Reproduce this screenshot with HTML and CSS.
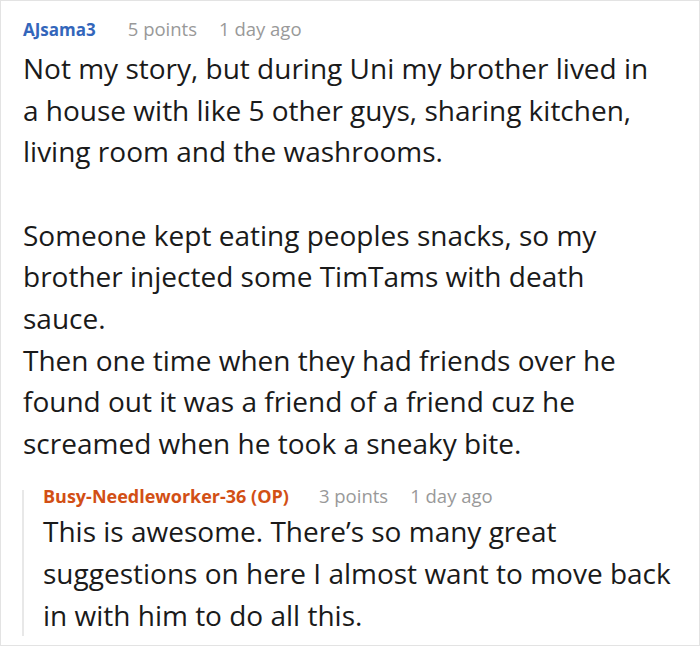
FILE: index.html
```html
<!DOCTYPE html>
<html>
<head>
<meta charset="utf-8">
<link rel="stylesheet" href="styles.css">
</head>
<body>
<div class="frame">
  <div class="comment">
    <div class="meta">
      <span class="author">AJsama3</span>
      <span class="info">5 points</span>
      <span class="info">1 day ago</span>
    </div>
    <div class="text main-text">
      <p>Not my story, but during Uni my brother lived in a house with like 5 other guys, sharing kitchen, living room and the washrooms.</p>
      <p class="gap">Someone kept eating peoples snacks, so my brother injected some TimTams with death sauce.<br>Then one time when they had friends over he found out it was a friend of a friend cuz he screamed when he took a sneaky bite.</p>
    </div>
    <div class="reply">
      <div class="meta">
        <span class="author op">Busy-Needleworker-36 (OP)</span>
        <span class="info">3 points</span>
        <span class="info">1 day ago</span>
      </div>
      <div class="text reply-text">
        <p>This is awesome. There’s so many great suggestions on here I almost want to move back in with him to do all this.</p>
      </div>
    </div>
  </div>
</div>
</body>
</html>
```

FILE: styles.css
```css
html, body {
  margin: 0;
  padding: 0;
  background: #fff;
}
.frame {
  width: 700px;
  height: 646px;
  box-sizing: border-box;
  border: 1px solid #e3e3e3;
  overflow: hidden;
  font-family: "Open Sans", "Noto Sans", sans-serif;
}
.comment {
  padding: 15px 0 0 22px;
}
.meta {
  display: flex;
  align-items: baseline;
  line-height: 26px;
}
.author {
  font-size: 17px;
  font-weight: bold;
  color: #3366bb;
  margin-right: 32px;
}
.author.op {
  font-size: 18px;
  color: #d24f15;
  margin-right: 30px;
}
.info {
  font-size: 18.5px;
  color: #999;
  margin-right: 22px;
}
.text {
  font-size: 28px;
  line-height: 41.6px;
  color: #1a1a1a;
}
.text p {
  margin: 0;
}
.text p.gap {
  margin-top: 42px;
}
.main-text {
  margin-top: 5px;
  padding-right: 34px;
}
.reply {
  margin-top: 26px;
  margin-left: -1px;
  border-left: 2px solid #e8e8e8;
  padding-left: 19px;
}
.reply .meta {
  line-height: 12px;
}
.reply-text {
  margin-top: 9px;
  padding-right: 14px;
}
```
